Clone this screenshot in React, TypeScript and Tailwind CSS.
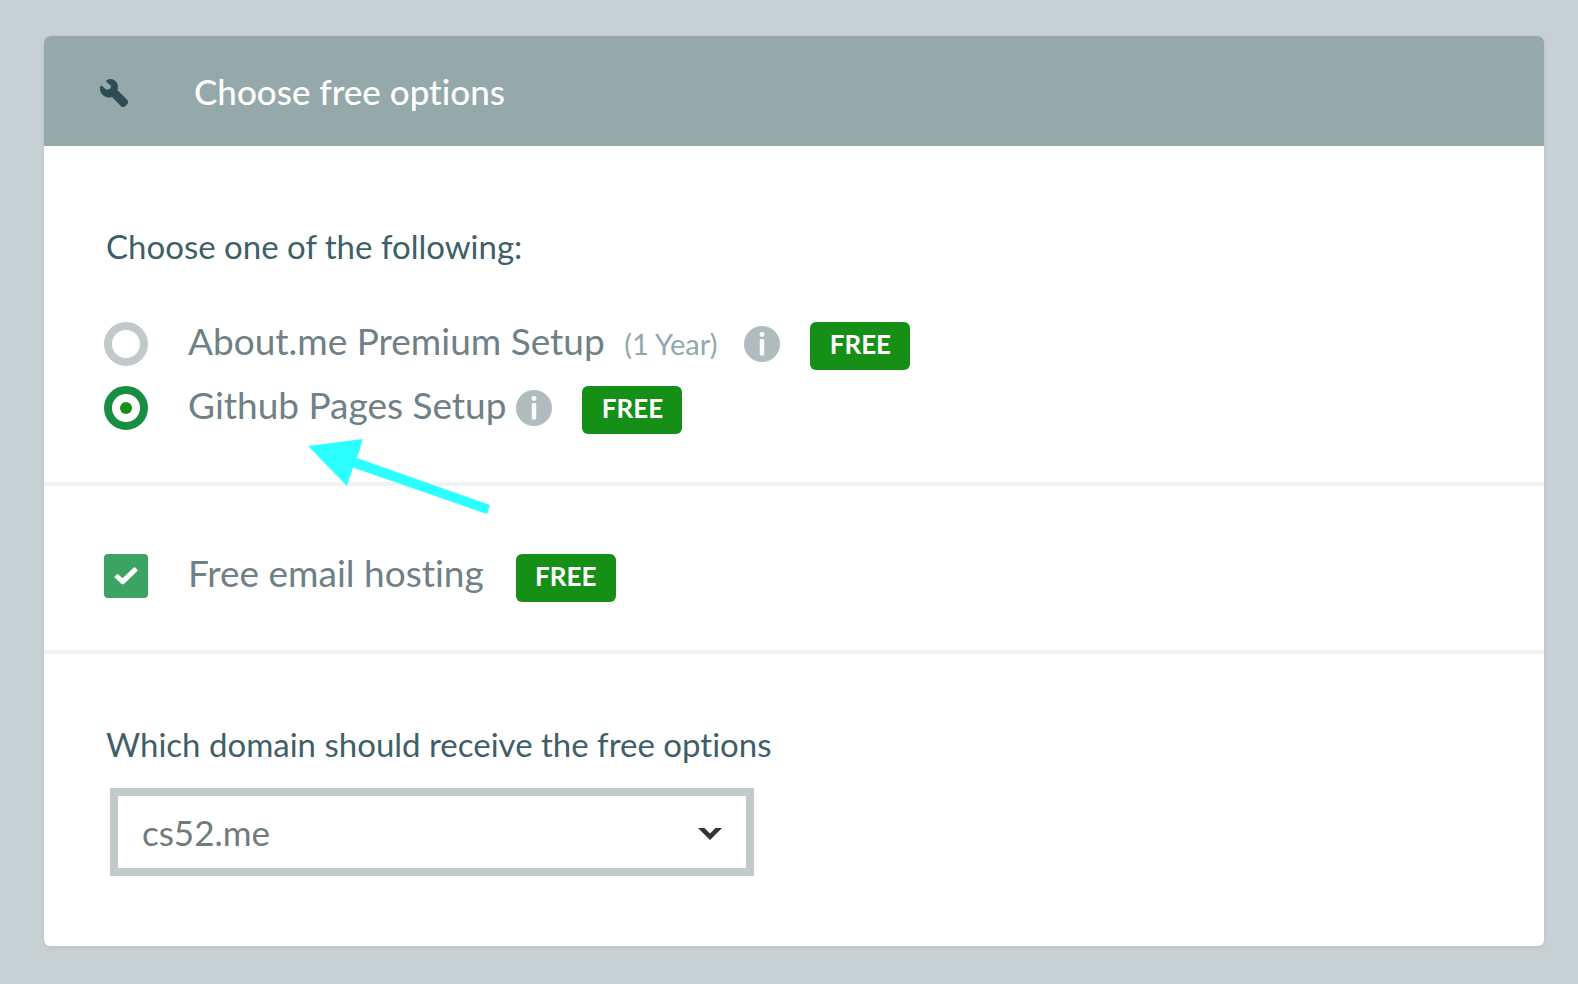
import type { ReactNode } from "react";

function FreeBadge({ className = "" }: { className?: string }) {
  return (
    <span
      className={`h-12 w-[100px] shrink-0 rounded-md bg-[#158f15] text-center text-[26px] leading-[44px] font-bold text-white ${className}`}
    >
      FREE
    </span>
  );
}

function InfoButton({ label, className = "" }: { label: string; className?: string }) {
  return (
    <button type="button" aria-label={label} className={`mt-1 size-9 shrink-0 ${className}`}>
      <svg viewBox="0 0 36 36" className="size-9" aria-hidden="true">
        <circle cx="18" cy="18" r="18" fill="#b1bcbf" />
        <circle cx="18" cy="8.5" r="2.4" fill="#fff" />
        <rect x="15.8" y="13" width="4.4" height="16.5" rx="1.6" fill="#fff" />
      </svg>
    </button>
  );
}

function OptionLabel({ htmlFor, children }: { htmlFor: string; children: ReactNode }) {
  return (
    <label htmlFor={htmlFor} className="ml-10 text-[37px] leading-[38px] text-[#6f8087]">
      {children}
    </label>
  );
}

function Radio({ id, defaultChecked }: { id: string; defaultChecked?: boolean }) {
  return (
    <span className="grid size-11 shrink-0 place-items-center">
      <input
        id={id}
        type="radio"
        name="setup"
        defaultChecked={defaultChecked}
        className="peer col-start-1 row-start-1 size-11 appearance-none rounded-full border-8 border-[#c1c9cb] bg-white checked:border-[#168f42]"
      />
      <span className="pointer-events-none col-start-1 row-start-1 size-3 rounded-full bg-[#158f15] opacity-0 peer-checked:opacity-100" />
    </span>
  );
}

export default function App() {
  return (
    <main className="min-h-screen bg-[#c7d0d3] pt-9 pr-[34px] pb-[38px] pl-11 font-['Lato',sans-serif] [font-variant-ligatures:none]">
      <form className="overflow-hidden rounded-md bg-white shadow-[0_1px_4px_rgba(0,0,0,0.08)]">
        <header className="flex h-[110px] items-center bg-[#95a8aa] pl-14">
          <svg viewBox="0 0 28 28" className="mt-1 size-7 shrink-0" aria-hidden="true">
            <path
              d="M6.8 1.4C8.4.1 11.4-.3 14 1.2c3 1.8 4.2 5 3.500 8.300L17.300 11.200 27 20.900c1.200 1.300 1.300 2.500.2 3.900l-2.300 2.500c-1.300 1.100-2.500 1-3.700-.2L12 17.700c-2.600 1.100-6.100.6-8.600-1.400C.8 14-.3 10.600.2 7.800c.2-1 1.200-1.200 1.900-.5L5.300 10.300c.8.700 1.600.8 2.600.5l2-.8c.8-.4 1.200-1 1.300-1.800.1-1.100-.2-1.900-1-2.500L7 3.300C6.200 2.600 6.200 1.900 6.800 1.400Z"
              fill="#2d4d55"
              stroke="#2d4d55"
              strokeWidth="0.6"
            />
          </svg>
          <h1 className="ml-[66px] text-[35px] leading-[44px] font-medium text-white">Choose free options</h1>
        </header>

        <section role="radiogroup" aria-labelledby="setup-heading" className="pt-[78px] pr-8 pb-12 pl-[60px]">
          <h2 id="setup-heading" className="pl-[2px] text-[33px] leading-[44px] text-[#3f5f68]">
            Choose one of the following:
          </h2>
          <div className="mt-[54px] flex items-start">
            <Radio id="about" />
            <OptionLabel htmlFor="about">
              About.me Premium Setup <span className="ml-[10px] text-[29px] text-[#93a7ae]">(1 Year)</span>
            </OptionLabel>
            <InfoButton label="About.me details" className="ml-[27px]" />
            <FreeBadge className="ml-[30px]" />
          </div>
          <div className="relative mt-4 flex items-start">
            <Radio id="github" defaultChecked />
            <OptionLabel htmlFor="github">Github Pages Setup</OptionLabel>
            <InfoButton label="Github Pages details" className="ml-[10px]" />
            <FreeBadge className="ml-[30px]" />
            <svg
              viewBox="0 0 182 76"
              className="pointer-events-none absolute top-[53px] left-[204px] h-[76px] w-[182px]"
              aria-hidden="true"
            >
              <path d="M0 7 55 0 49 19 182 66 179 75 45 28.500 39 47Z" fill="#2bffff" />
            </svg>
          </div>
        </section>

        <section className="border-y-4 border-[#f1f2f2] pt-[68px] pr-8 pb-12 pl-[60px]">
          <div className="flex items-start">
            <span className="grid size-11 shrink-0 place-items-center">
              <input
                id="email"
                type="checkbox"
                defaultChecked
                className="peer col-start-1 row-start-1 size-11 appearance-none rounded-sm border-2 border-[#3ca364] bg-white checked:bg-[#3ca364]"
              />
              <svg
                viewBox="0 0 24 18"
                className="pointer-events-none col-start-1 row-start-1 h-[18px] w-6 opacity-0 peer-checked:opacity-100"
                aria-hidden="true"
              >
                <path
                  d="M.6 9.400 3 7.200Q3.500 6.800 4 7.200L8.600 11.200 19.800.600Q20.500 0 21.200.600L23.400 2.800Q24 3.400 23.400 4L10.200 16.800Q8.800 17.800 7.300 16.800L.6 10.600Q0 10 .6 9.400Z"
                  fill="#fff"
                />
              </svg>
            </span>
            <OptionLabel htmlFor="email">Free email hosting</OptionLabel>
            <FreeBadge className="ml-8" />
          </div>
        </section>

        <section className="pt-[68px] pr-8 pb-[70px] pl-[60px]">
          <label htmlFor="domain" className="block pl-[2px] text-[33px] leading-[44px] text-[#3f5f68]">
            Which domain should receive the free options
          </label>
          <div className="mt-[22px] ml-[6px] grid max-w-[644px] items-center">
            <select
              id="domain"
              className="col-start-1 row-start-1 h-[88px] w-full appearance-none border-8 border-[#c1c9cb] bg-white px-6 text-[35px] text-[#707b7e]"
            >
              <option>cs52.me</option>
            </select>
            <svg
              viewBox="0 0 24 12"
              className="pointer-events-none col-start-1 row-start-1 mt-1 mr-8 h-3 w-6 justify-self-end"
              aria-hidden="true"
            >
              <path d="M0 0H6.500L12 5.500 17.500 0H24L12 12Z" fill="#333" />
            </svg>
          </div>
        </section>
      </form>
    </main>
  );
}
